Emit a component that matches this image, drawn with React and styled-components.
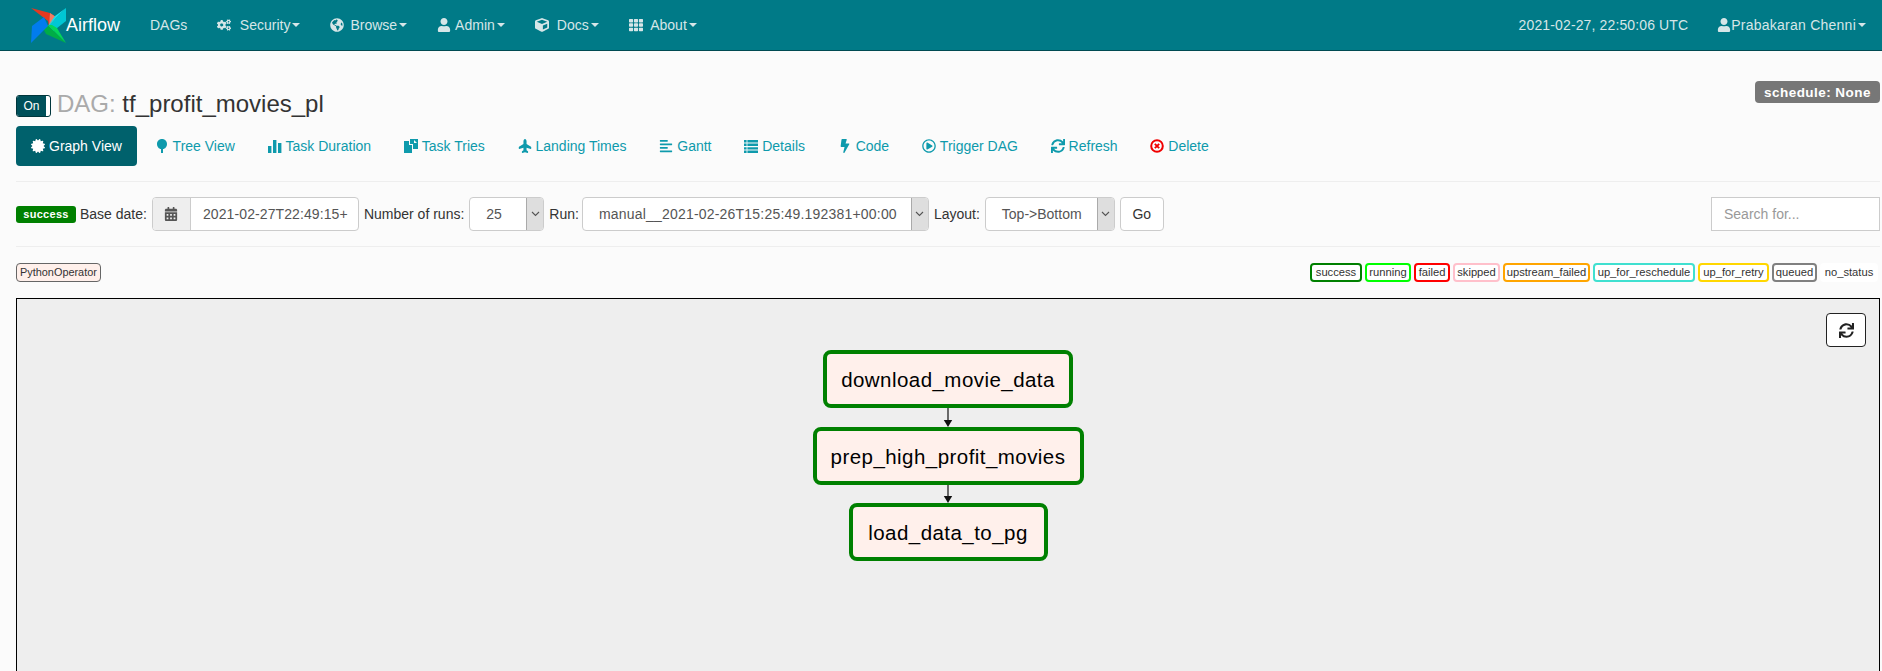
import React from 'react';
import styled, { createGlobalStyle } from 'styled-components';
import {
  FaCogs, FaGlobeAmericas, FaUser, FaCube, FaTh, FaCertificate,
  FaAlignLeft, FaBolt, FaRegPlayCircle, FaSync, FaPlane, FaCalendarAlt,
} from 'react-icons/fa';

const GlobalStyle = createGlobalStyle`
  html, body {
    margin: 0;
    height: 100%;
    overflow: hidden;
    background: #fbfbfb;
    font-family: "Liberation Sans", Arial, sans-serif;
    font-size: 14px;
    color: #333;
  }
  * { box-sizing: border-box; }
`;

const Page = styled.div`
  height: 100vh;
  overflow: hidden;
  display: flex;
  flex-direction: column;
`;

const Navbar = styled.nav`
  flex: none;
  height: 51px;
  padding-right: 1px;
  display: flex;
  align-items: center;
  background: #007a87;
  border-bottom: 1px solid #004a52;
  color: #d6e6e8;
`;

const Brand = styled.a`
  display: flex;
  align-items: center;
  margin-left: 31px;
  margin-right: 15px;
  width: 89px;
  font-size: 18px;
  color: #fff;
`;

const NavItem = styled.a`
  display: flex;
  align-items: center;
  padding: 0 15px;
  height: 50px;
  color: #d6e6e8;
  white-space: nowrap;
  letter-spacing: ${p => p.$spacing || 0}px;
`;

const NavIcon = styled.span`
  display: inline-flex;
  width: ${p => p.$width}px;
  font-size: 14px;
`;

const Caret = styled.span`
  width: 0;
  height: 0;
  margin-left: 2px;
  border-top: 4px solid currentColor;
  border-left: 4px solid transparent;
  border-right: 4px solid transparent;
`;

const NavSpacer = styled.div`
  flex: 1;
`;

const Clock = styled.span`
  margin-right: 14px;
  white-space: nowrap;
  letter-spacing: 0.13px;
`;

const Content = styled.main`
  flex: 1;
  min-height: 0;
  padding: 0 2px 0 16px;
  display: flex;
  flex-direction: column;
`;

const TitleRow = styled.div`
  position: relative;
  flex: none;
  height: 75px;
  display: flex;
  align-items: flex-end;
  padding-bottom: 9px;
`;

const Toggle = styled.span`
  flex: none;
  width: 35px;
  height: 22px;
  margin-right: 6px;
  background: #fff;
  border: 1px solid #00363c;
  border-radius: 3px;
  overflow: hidden;
  display: flex;
`;

const ToggleOn = styled.span`
  width: 29px;
  background: #00505a;
  color: #fff;
  font-size: 12px;
  display: flex;
  align-items: center;
  justify-content: center;
`;

const Title = styled.h4`
  margin: 0;
  font-size: 24px;
  font-weight: 400;
  line-height: 26px;
  color: #333;
  span { color: #aaa; }
`;

const ScheduleBadge = styled.span`
  position: absolute;
  right: 0;
  top: 30px;
  height: 22px;
  width: 125px;
  border-radius: 4px;
  background: #777;
  color: #fff;
  font-weight: 700;
  font-size: 13.5px;
  letter-spacing: 0.45px;
  display: flex;
  align-items: center;
  justify-content: center;
`;

const Tabs = styled.div`
  flex: none;
  display: flex;
  height: 40px;
  gap: 2.7px;
`;

const Tab = styled.a`
  display: flex;
  align-items: center;
  padding: 0 15px;
  border-radius: 4px;
  color: ${p => (p.$active ? '#fff' : '#0e9aac')};
  background: ${p => (p.$active ? '#00616c' : 'transparent')};
  white-space: nowrap;
`;

const TabIcon = styled.span`
  display: inline-flex;
  justify-content: center;
  width: 14px;
  margin-right: 4px;
  font-size: 14px;
`;

const Rule = styled.hr`
  flex: none;
  width: 100%;
  height: 1px;
  margin: ${p => p.$top || 0}px 0 0;
  border: 0;
  background: #eeeeee;
`;

const Controls = styled.form`
  height: 64px;
  flex: none;
  display: flex;
  align-items: center;
  margin: 0;
`;

const StateLabel = styled.span`
  width: 60px;
  height: 17px;
  margin-right: 4px;
  border-radius: 3px;
  background: green;
  color: #fff;
  font-size: 11px;
  font-weight: 700;
  letter-spacing: 0.3px;
  display: flex;
  align-items: center;
  justify-content: center;
`;

const FieldLabel = styled.label`
  margin-right: ${p => p.$gap || 5}px;
  white-space: nowrap;
`;

const InputGroup = styled.div`
  width: 207px;
  height: 34px;
  margin-right: 5px;
  display: flex;
  border: 1px solid #ccc;
  border-radius: 4px;
  background: #fff;
  overflow: hidden;
`;

const Addon = styled.span`
  width: 38px;
  flex: none;
  background: #eee;
  border-right: 1px solid #ccc;
  color: #555;
  display: flex;
  align-items: center;
  justify-content: center;
`;

const DateValue = styled.span`
  flex: 1;
  margin: 0 12px;
  line-height: 32px;
  color: #555;
  white-space: nowrap;
  letter-spacing: 0.1px;
`;

const SelectBox = styled.div`
  width: ${p => p.$width}px;
  height: 34px;
  margin-right: 5px;
  display: flex;
  border: 1px solid #ccc;
  border-radius: 4px;
  background: #fff;
  overflow: hidden;
`;

const SelectValue = styled.span`
  flex: 1;
  padding-left: 16px;
  line-height: 32px;
  color: #555;
  white-space: nowrap;
  letter-spacing: ${p => p.$spacing || 0}px;
`;

const SelectArrow = styled.span`
  width: 17px;
  flex: none;
  background: #dedede;
  border-left: 1px solid #aaa;
  color: #555;
  display: flex;
  align-items: center;
  justify-content: center;
`;

const GoButton = styled.button`
  width: 44px;
  height: 34px;
  padding: 0;
  background: #fff;
  border: 1px solid #ccc;
  border-radius: 4px;
  color: #333;
  font: inherit;
`;

const SearchInput = styled.div`
  margin-left: auto;
  width: 169px;
  height: 34px;
  padding-left: 12px;
  line-height: 32px;
  background: #fff;
  border: 1px solid #ccc;
  color: #999;
`;

const LegendRow = styled.div`
  flex: none;
  height: 51px;
  display: flex;
  align-items: center;
  justify-content: space-between;
  padding-right: 2px;
`;

const Legend = styled.div`
  display: flex;
  gap: 3px;
`;

const OperatorChip = styled.span`
  height: 19px;
  padding: 0 3px;
  border: 1px solid #666;
  border-radius: 4px;
  background: #fff0eb;
  color: #333;
  font-size: 10.9px;
  line-height: 17px;
  white-space: nowrap;
`;

const StateChip = styled.span`
  width: ${p => p.$width}px;
  height: 19px;
  border: 2px solid ${p => p.$color};
  border-radius: 4px;
  background: #fff;
  color: #333;
  font-size: 11.2px;
  line-height: 15px;
  text-align: center;
  white-space: nowrap;
`;

const GraphBox = styled.section`
  position: relative;
  flex: none;
  height: 500px;
  padding-top: 51px;
  display: flex;
  flex-direction: column;
  align-items: center;
  background: #eee;
  border: 1px solid #000;
`;

const RefreshButton = styled.button`
  position: absolute;
  top: 14px;
  right: 13px;
  width: 40px;
  height: 34px;
  padding: 0;
  display: flex;
  align-items: center;
  justify-content: center;
  background: #fff;
  border: 1px solid #222;
  border-radius: 4px;
  color: #222;
  font-size: 15px;
`;

const TaskNode = styled.div`
  flex: none;
  width: ${p => p.$width}px;
  height: 58px;
  display: flex;
  align-items: center;
  justify-content: center;
  background: #fff0eb;
  border: 4px solid green;
  border-radius: 8px;
  color: #000;
  font-size: 20.5px;
  letter-spacing: 0.45px;
  padding-top: 2px;
  white-space: nowrap;
`;

const EdgeSvg = styled.svg`
  display: block;
  flex: none;
`;

const TreeIcon = () => (
  <svg width="14" height="14" viewBox="0 0 14 14" fill="currentColor">
    <path d="M7 0C10 0 12 2.2 12 5c0 2.8-2 5-4 5v4H6v-4C4 10 2 7.8 2 5 2 2.2 4 0 7 0z" />
  </svg>
);

const StatsIcon = () => (
  <svg width="14" height="14" viewBox="0 0 14 14" fill="currentColor">
    <rect x="0" y="7" width="3.4" height="7" />
    <rect x="5" y="1" width="3.4" height="13" />
    <rect x="10" y="4" width="3.4" height="10" />
  </svg>
);

const DuplicateIcon = () => (
  <svg width="14" height="14" viewBox="0 0 14 14" fill="currentColor">
    <path d="M0 2h5v4h3v8H0z" />
    <path d="M6 0h3l3 0v0h2v10H9V5H6z" />
    <path d="M10 1v3h3z" fill="#fbfbfb" />
  </svg>
);

const ListIcon = () => (
  <svg width="14" height="14" viewBox="0 0 14 14" fill="currentColor">
    <path d="M0 1h2.6v2.4H0zM3.4 1H14v2.4H3.4zM0 4.6h2.6V7H0zM3.4 4.6H14V7H3.4zM0 8.2h2.6v2.4H0zM3.4 8.2H14v2.4H3.4zM0 11.6h2.6V14H0zM3.4 11.6H14V14H3.4z" />
  </svg>
);

const RemoveCircleIcon = () => (
  <svg width="14" height="14" viewBox="0 0 14 14">
    <circle cx="7" cy="7" r="5.8" fill="none" stroke="#f00000" strokeWidth="2" />
    <path d="M4.8 4.8l4.4 4.4M9.2 4.8l-4.4 4.4" stroke="#f00000" strokeWidth="1.9" />
  </svg>
);

const Chevron = () => (
  <svg width="9" height="6" viewBox="0 0 9 6">
    <path d="M1 1l3.5 3.5L8 1" fill="none" stroke="#555" strokeWidth="1.1" />
  </svg>
);

const Logo = () => (
  <svg width="35" height="35" viewBox="0 0 35 35">
    <path d="M0 0 L19 5 L25 9 L18 19 L17 13 Z" fill="#e43921" />
    <path d="M19 5 L25 9 L18 19 Z" fill="#f37d64" />
    <path d="M35 0 L35 13 L21 24 L17 18 Z" fill="#00c7d4" />
    <path d="M35 0 L24 8 L17 18 Z" fill="#11e1ee" />
    <path d="M35 35 L15 26 L11 18 L17 17 Z" fill="#00ad46" />
    <path d="M17 17 L35 35 L26 20 L21 17 Z" fill="#04d659" />
    <path d="M0 35 L1 18 L13 9 L17 18 Z" fill="#017cee" />
    <path d="M0 35 L10 25 L17 18 Z" fill="#00a0ff" opacity="0.6" />
  </svg>
);

const Edge = ({ height }) => (
  <EdgeSvg width="12" height={height} viewBox={`0 0 12 ${height}`}>
    <path d={`M6 0V${height - 6}`} stroke="#111" strokeWidth="1.2" />
    <path d={`M1.8 ${height - 7}H10.2L6 ${height}Z`} fill="#111" />
  </EdgeSvg>
);

const navLinks = [
  { label: 'Security', Icon: FaCogs, width: 22.5 },
  { label: 'Browse', Icon: FaGlobeAmericas, width: 20 },
  { label: 'Admin', Icon: FaUser, width: 18 },
  { label: 'Docs', Icon: FaCube, width: 22 },
  { label: 'About', Icon: FaTh, width: 21.5 },
];

const tabs = [
  { label: 'Graph View', icon: <FaCertificate />, active: true },
  { label: 'Tree View', icon: <TreeIcon /> },
  { label: 'Task Duration', icon: <StatsIcon /> },
  { label: 'Task Tries', icon: <DuplicateIcon /> },
  { label: 'Landing Times', icon: <FaPlane style={{ transform: 'rotate(-90deg)' }} /> },
  { label: 'Gantt', icon: <FaAlignLeft /> },
  { label: 'Details', icon: <ListIcon /> },
  { label: 'Code', icon: <FaBolt /> },
  { label: 'Trigger DAG', icon: <FaRegPlayCircle /> },
  { label: 'Refresh', icon: <FaSync /> },
  { label: 'Delete', icon: <RemoveCircleIcon /> },
];

const legend = [
  { label: 'success', color: 'green', width: 52 },
  { label: 'running', color: 'lime', width: 46 },
  { label: 'failed', color: 'red', width: 36 },
  { label: 'skipped', color: 'pink', width: 47 },
  { label: 'upstream_failed', color: 'orange', width: 87 },
  { label: 'up_for_reschedule', color: 'turquoise', width: 102 },
  { label: 'up_for_retry', color: 'gold', width: 71 },
  { label: 'queued', color: 'gray', width: 45 },
  { label: 'no_status', color: '#fff', width: 58 },
];

const App = () => (
  <Page>
    <GlobalStyle />
    <Navbar>
      <Brand><Logo />Airflow</Brand>
      <NavItem>DAGs</NavItem>
      {navLinks.map(({ label, Icon, width }) => (
        <NavItem key={label}>
          <NavIcon $width={width}><Icon /></NavIcon>{label}<Caret />
        </NavItem>
      ))}
      <NavSpacer />
      <Clock>2021-02-27, 22:50:06 UTC</Clock>
      <NavItem $spacing={0.24}>
        <NavIcon $width={14}><FaUser /></NavIcon>Prabakaran Chenni<Caret />
      </NavItem>
    </Navbar>

    <Content>
      <TitleRow>
        <Toggle><ToggleOn>On</ToggleOn></Toggle>
        <Title><span>DAG: </span>tf_profit_movies_pl</Title>
        <ScheduleBadge>schedule: None</ScheduleBadge>
      </TitleRow>

      <Tabs>
        {tabs.map(t => (
          <Tab key={t.label} $active={t.active}>
            <TabIcon>{t.icon}</TabIcon>{t.label}
          </Tab>
        ))}
      </Tabs>

      <Rule $top={15} />

      <Controls>
        <StateLabel>success</StateLabel>
        <FieldLabel>Base date:</FieldLabel>
        <InputGroup>
          <Addon><FaCalendarAlt /></Addon>
          <DateValue>2021-02-27T22:49:15+</DateValue>
        </InputGroup>
        <FieldLabel>Number of runs:</FieldLabel>
        <SelectBox $width={75}>
          <SelectValue>25</SelectValue>
          <SelectArrow><Chevron /></SelectArrow>
        </SelectBox>
        <FieldLabel $gap={3}>Run:</FieldLabel>
        <SelectBox $width={347}>
          <SelectValue $spacing={0.2}>manual__2021-02-26T15:25:49.192381+00:00</SelectValue>
          <SelectArrow><Chevron /></SelectArrow>
        </SelectBox>
        <FieldLabel>Layout:</FieldLabel>
        <SelectBox $width={130}>
          <SelectValue>Top-&gt;Bottom</SelectValue>
          <SelectArrow><Chevron /></SelectArrow>
        </SelectBox>
        <GoButton type="button">Go</GoButton>
        <SearchInput>Search for...</SearchInput>
      </Controls>

      <Rule />

      <LegendRow>
        <OperatorChip>PythonOperator</OperatorChip>
        <Legend>
          {legend.map(l => <StateChip key={l.label} $color={l.color} $width={l.width}>{l.label}</StateChip>)}
        </Legend>
      </LegendRow>

      <GraphBox>
        <RefreshButton type="button"><FaSync /></RefreshButton>
        <TaskNode $width={250}>download_movie_data</TaskNode>
        <Edge height={19} />
        <TaskNode $width={271}>prep_high_profit_movies</TaskNode>
        <Edge height={18} />
        <TaskNode $width={199}>load_data_to_pg</TaskNode>
      </GraphBox>
    </Content>
  </Page>
);

export default App;
